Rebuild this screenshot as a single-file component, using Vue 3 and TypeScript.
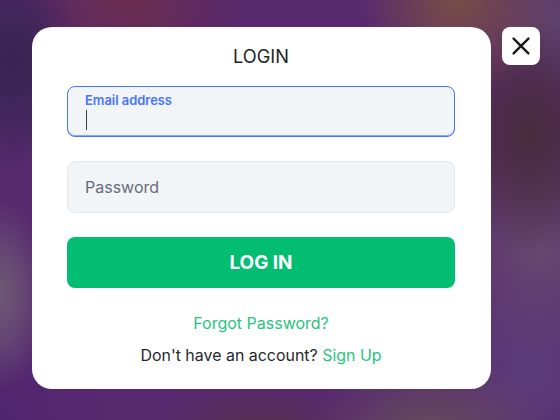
<script setup lang="ts">
const title: string = 'LOGIN'
</script>

<template>
  <div class="page">
    <main class="card">
      <h1 class="title">{{ title }}</h1>
      <div class="field focused">
        <span class="label">Email address</span>
        <span class="caret"></span>
      </div>
      <div class="field">
        <span class="placeholder">Password</span>
      </div>
      <button class="submit" type="button">LOG IN</button>
      <a class="forgot">Forgot Password?</a>
      <p class="signup">Don't have an account? <a>Sign Up</a></p>
    </main>
    <button class="close" type="button" aria-label="Close">
      <svg width="20" height="20" viewBox="0 0 20 20" fill="none">
        <path d="M2.6 2.6L17.4 17.4M17.4 2.6L2.6 17.4" stroke="#16181d" stroke-width="2.4" stroke-linecap="round" />
      </svg>
    </button>
  </div>
</template>

<style>
html, body { margin: 0; padding: 0; }
</style>

<style scoped>
.page {
  width: 560px;
  height: 420px;
  box-sizing: border-box;
  padding: 27px 20px 31px 32px;
  display: flex;
  align-items: flex-start;
  gap: 11px;
  overflow: hidden;
  font-family: Inter, "Liberation Sans", sans-serif;
  background:
    radial-gradient(ellipse 50px 95px at 0px 295px, rgba(112, 92, 118, 0.95), rgba(112, 92, 118, 0.55) 50%, transparent),
    radial-gradient(ellipse 70px 110px at 12px 62px, rgba(54, 36, 80, 1), rgba(54, 36, 80, 0.6) 50%, transparent),
    radial-gradient(circle 120px at 130px -10px, rgba(112, 46, 70, 0.85), rgba(112, 46, 70, 0.4) 50%, transparent),
    radial-gradient(circle 100px at 458px 0px, rgba(122, 80, 68, 0.95), rgba(122, 80, 68, 0.5) 50%, transparent),
    radial-gradient(ellipse 80px 120px at 530px 135px, rgba(74, 44, 60, 1), rgba(74, 44, 60, 0.6) 50%, transparent),
    radial-gradient(circle 80px at 560px 20px, rgba(98, 70, 112, 0.9), rgba(98, 70, 112, 0.5) 50%, transparent),
    radial-gradient(circle 110px at 540px 250px, rgba(106, 74, 112, 0.9), rgba(106, 74, 112, 0.5) 50%, transparent),
    radial-gradient(ellipse 120px 70px at 430px 430px, rgba(104, 78, 92, 0.95), rgba(104, 78, 92, 0.5) 50%, transparent),
    radial-gradient(ellipse 110px 50px at 260px 430px, rgba(86, 52, 72, 0.85), rgba(86, 52, 72, 0.4) 50%, transparent),
    radial-gradient(circle 100px at 530px 370px, rgba(94, 62, 124, 0.9), rgba(94, 62, 124, 0.5) 50%, transparent),
    radial-gradient(circle 110px at 0px 420px, rgba(78, 36, 112, 0.8), rgba(78, 36, 112, 0.4) 50%, transparent),
    #57296f;
}
.card {
  width: 459px;
  height: 362px;
  flex: none;
  box-sizing: border-box;
  padding: 17px 36px 0 35px;
  display: flex;
  flex-direction: column;
  align-items: center;
  background: #fff;
  border-radius: 20px;
}
.title {
  margin: 0 0 17px;
  font-size: 18.2px;
  line-height: 25px;
  height: 25px;
  font-weight: 400;
  color: #1d1f24;
}
.field {
  width: 388px;
  height: 52px;
  flex: none;
  box-sizing: border-box;
  padding: 0 17px;
  margin-bottom: 24px;
  display: flex;
  flex-direction: column;
  justify-content: center;
  background: #f1f5f8;
  border: 1px solid #e2e7ec;
  border-radius: 8px;
}
.focused {
  height: 51px;
  justify-content: flex-start;
  padding-top: 6px;
  border: 1px solid #4a72ff;
  box-shadow: inset 0 -1px 0 #8aa4ff;
}
.label {
  font-size: 12.9px;
  line-height: 16px;
  font-weight: 600;
  color: #4a72ff;
}
.caret {
  display: block;
  width: 1px;
  height: 20px;
  margin: 1px 0 0 1px;
  background: #3a3c44;
}
.placeholder {
  font-size: 16px;
  line-height: 20px;
  color: #666b78;
}
.submit {
  width: 388px;
  height: 51px;
  flex: none;
  border: none;
  padding: 0;
  border-radius: 8px;
  background: #03bd73;
  color: #fff;
  font: 700 18.9px/24px Inter, "Liberation Sans", sans-serif;
}
.forgot {
  margin-top: 25px;
  font-size: 16px;
  line-height: 20px;
  color: #27c47f;
}
.signup {
  margin: 13px 0 0;
  font-size: 15.95px;
  line-height: 20px;
  color: #26282e;
}
.signup a { color: #27c47f; }
.close {
  width: 38px;
  height: 38px;
  flex: none;
  padding: 0;
  display: flex;
  align-items: center;
  justify-content: center;
  border: none;
  border-radius: 8px;
  background: #fff;
}
</style>
